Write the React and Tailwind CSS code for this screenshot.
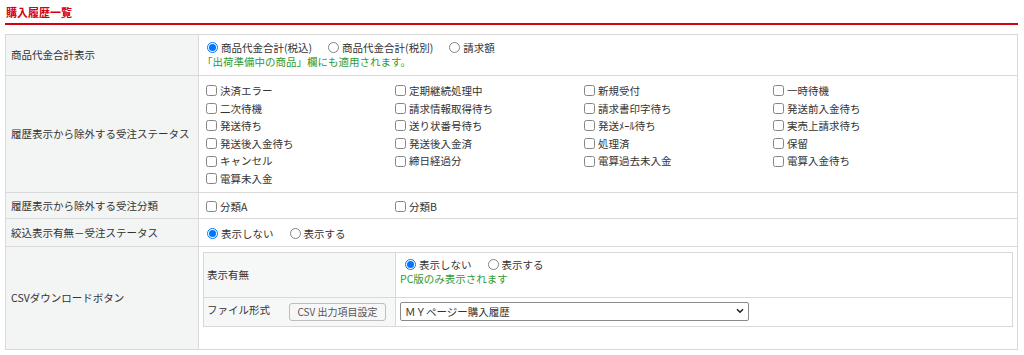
import React from 'react';

const font = { fontFamily: '"Noto Sans CJK JP", "Noto Sans", sans-serif' };

const statusList = [
  '決済エラー', '定期継続処理中', '新規受付', '一時待機',
  '二次待機', '請求情報取得待ち', '請求書印字待ち', '発送前入金待ち',
  '発送待ち', '送り状番号待ち', '発送ﾒｰﾙ待ち', '実売上請求待ち',
  '発送後入金待ち', '発送後入金済', '処理済', '保留',
  'キャンセル', '締日経過分', '電算過去未入金', '電算入金待ち',
  '電算未入金',
];

const Check = ({ label }) => (
  <div className="flex items-center h-[17.6px] whitespace-nowrap">
    <span className="w-[11px] h-[11px] ml-[4px] mr-[3px] border border-[#858585] rounded-[2.5px] bg-white shrink-0" />
    <span>{label}</span>
  </div>
);

const Radio = ({ label, checked }) => (
  <div className="flex items-center whitespace-nowrap">
    {checked ? (
      <span className="w-[11px] h-[11px] ml-[5px] mr-[3px] rounded-full border border-[#0075ff] bg-white flex items-center justify-center shrink-0">
        <span className="w-[7px] h-[7px] rounded-full bg-[#0075ff]" />
      </span>
    ) : (
      <span className="w-[11px] h-[11px] ml-[5px] mr-[3px] rounded-full border border-[#858585] bg-white shrink-0" />
    )}
    <span>{label}</span>
  </div>
);

const Label = ({ children }) => (
  <div className="w-[193px] shrink-0 bg-[#f3f4f4] border-r border-[#d9d9d9] flex items-center pl-[5px]">
    {children}
  </div>
);

const App = () => {
  return (
    <div className="w-[1024px] h-[355px] bg-white pl-[5px] pr-[6px] pt-[5px] text-[10.5px] leading-[13.5px] text-[#333]" style={font}>
      <h2 className="text-[11px] leading-[14px] font-bold text-[#d40012] pl-[1px]">購入履歴一覧</h2>
      <div className="mt-[4px] h-[2px] bg-[#d3000f]" />

      <div className="mt-[9px] border border-[#d9d9d9]">
        {/* 商品代金合計表示 */}
        <div className="flex h-[40px]">
          <Label>商品代金合計表示</Label>
          <div className="flex-1 pl-[3px] pt-[6px]">
            <div className="flex gap-[11px]">
              <Radio label="商品代金合計(税込)" checked />
              <Radio label="商品代金合計(税別)" />
              <Radio label="請求額" />
            </div>
            <div className="text-[#2f9a2f]">「出荷準備中の商品」欄にも適用されます。</div>
          </div>
        </div>

        {/* 除外する受注ステータス */}
        <div className="flex h-[117px] border-t border-[#d9d9d9]">
          <Label>履歴表示から除外する受注ステータス</Label>
          <div className="flex-1 pl-[3px] pt-[6px]">
            <div className="grid grid-cols-[189px_189px_189px_189px]">
              {statusList.map((s) => (
                <Check key={s} label={s} />
              ))}
            </div>
          </div>
        </div>

        {/* 除外する受注分類 */}
        <div className="flex h-[26px] border-t border-[#d9d9d9]">
          <Label>履歴表示から除外する受注分類</Label>
          <div className="flex-1 pl-[3px] pt-[2px] flex items-center">
            <div className="grid grid-cols-[189px_189px]">
              <Check label="分類A" />
              <Check label="分類B" />
            </div>
          </div>
        </div>

        {/* 絞込表示有無 */}
        <div className="flex h-[28px] border-t border-[#d9d9d9]">
          <Label>絞込表示有無－受注ステータス</Label>
          <div className="flex-1 pl-[3px] pt-[2px] flex items-center gap-[11px]">
            <Radio label="表示しない" checked />
            <Radio label="表示する" />
          </div>
        </div>

        {/* CSVダウンロードボタン */}
        <div className="flex h-[103px] border-t border-[#d9d9d9]">
          <Label>CSVダウンロードボタン</Label>
          <div className="flex-1 pl-[4px] pr-[4px] pt-[5px]">
            <div className="border border-[#d9d9d9]">
              <div className="flex h-[44px]">
                <div className="w-[192px] shrink-0 bg-[#f6f7f7] border-r border-[#d9d9d9] flex items-center pl-[3px]">
                  表示有無
                </div>
                <div className="flex-1 pl-[4px] pt-[5px]">
                  <div className="flex gap-[11px]">
                    <Radio label="表示しない" checked />
                    <Radio label="表示する" />
                  </div>
                  <div className="text-[#2f9a2f]">PC版のみ表示されます</div>
                </div>
              </div>
              <div className="flex h-[29px] border-t border-[#d9d9d9]">
                <div className="w-[192px] shrink-0 bg-[#f6f7f7] border-r border-[#d9d9d9] flex items-start pl-[3px] pt-[5px] gap-[19px]">
                  <span>ファイル形式</span>
                  <button className="w-[97px] h-[18px] rounded-[3px] border border-[#bdbdbd] bg-[#f7f7f7] text-[10px] leading-[16px] text-[#555]">
                    CSV 出力項目設定
                  </button>
                </div>
                <div className="flex-1 pl-[4px] pt-[4px]">
                  <div className="relative w-[349px] h-[19px]">
                    <select className="appearance-none w-full h-full border border-[#8a8a8a] rounded-[2px] bg-white pl-[4px] text-[10.5px] text-[#333] outline-none">
                      <option>ＭＹページー購入履歴</option>
                    </select>
                    <svg className="absolute right-[5px] top-[6px] pointer-events-none" width="8" height="6" viewBox="0 0 8 6">
                      <path d="M1 1.2 L4 4.2 L7 1.2" fill="none" stroke="#222" strokeWidth="1.6" />
                    </svg>
                  </div>
                </div>
              </div>
            </div>
          </div>
        </div>
      </div>
    </div>
  );
};

export default App;
